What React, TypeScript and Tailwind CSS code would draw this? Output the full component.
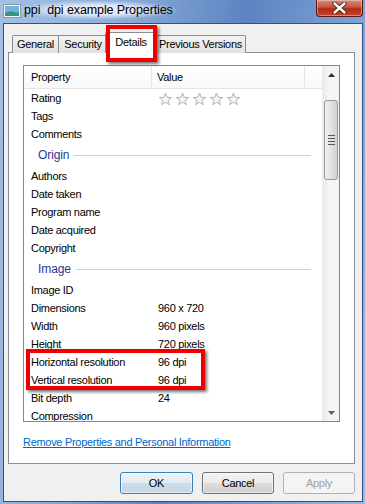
import React from "react";

type Row = { name: string; value?: string; stars?: boolean } | { group: string };

const rows: Row[] = [
  { name: "Rating", stars: true },
  { name: "Tags" },
  { name: "Comments" },
  { group: "Origin" },
  { name: "Authors" },
  { name: "Date taken" },
  { name: "Program name" },
  { name: "Date acquired" },
  { name: "Copyright" },
  { group: "Image" },
  { name: "Image ID" },
  { name: "Dimensions", value: "960 x 720" },
  { name: "Width", value: "960 pixels" },
  { name: "Height", value: "720 pixels" },
  { name: "Horizontal resolution", value: "96 dpi" },
  { name: "Vertical resolution", value: "96 dpi" },
  { name: "Bit depth", value: "24" },
  { name: "Compression" },
];

const Star = () => (
  <svg width="15" height="14" viewBox="0 0 14 14">
    <path
      d="M7 1 L8.59 5.32 L13.18 5.49 L9.57 8.33 L10.82 12.76 L7 10.2 L3.18 12.76 L4.43 8.33 L0.82 5.49 L5.41 5.32 Z"
      fill="#f7f7f7"
      stroke="#b4b4b4"
      strokeWidth="1"
      strokeLinejoin="round"
    />
  </svg>
);

const FileIcon = () => (
  <svg width="18" height="14" viewBox="0 0 18 14">
    <rect x="0.5" y="0.5" width="17" height="13" fill="#f4f6f8" stroke="#8a9aa8" />
    <rect x="2" y="2" width="14" height="10" fill="#6fb7e0" />
    <path d="M2 9 Q7 6 11 8 T16 7 V12 H2 Z" fill="#3f8f7a" />
  </svg>
);

const CloseButton = () => (
  <div className="ml-auto mr-[2px] self-start w-[47px] h-[17px] rounded-b-[4px] border border-t-0 border-[#5a1b13] bg-[linear-gradient(180deg,#d88b7c_0%,#c8533f_45%,#b02a17_55%,#c9452d_100%)] flex items-center justify-center shadow-[inset_0_0_0_1px_rgba(255,255,255,0.35)]">
    <svg width="15" height="12" viewBox="0 0 15 12">
      <path d="M2.5 1.5 L12.5 10.5 M12.5 1.5 L2.5 10.5" stroke="#3b1a14" strokeWidth="4.2" strokeLinecap="round" />
      <path d="M2.5 1.5 L12.5 10.5 M12.5 1.5 L2.5 10.5" stroke="#ffffff" strokeWidth="2.4" strokeLinecap="round" />
    </svg>
  </div>
);

const tabBase =
  "flex items-center justify-center border border-b-0 border-[#898c95] rounded-t-[2px] text-black";

export default function App() {
  return (
    <div
      className="relative w-[365px] h-[504px] overflow-hidden flex flex-col bg-[linear-gradient(100deg,#a3c0e4_0%,#8fb0dc_25%,#5d83c1_55%,#7c9fd2_78%,#9bb8df_100%)] text-[11px] tracking-[-0.3px]"
      style={{ fontFamily: '"Liberation Sans", Arial, sans-serif' }}
    >
      {/* title bar */}
      <div className="h-[23px] flex items-center pl-[3px]">
        <div className="self-start mt-[4px]">
          <FileIcon />
        </div>
        <span className="mt-[-3px] px-[3px] text-[12.5px] tracking-[-0.1px] text-black bg-[radial-gradient(ellipse_at_center,rgba(255,255,255,0.75)_35%,rgba(255,255,255,0)_75%)]">
          ppi&nbsp;&nbsp;dpi example Properties
        </span>
        <CloseButton />
      </div>

      {/* dialog body */}
      <div className="ml-[3px] mr-[2px] mb-[2px] flex-1 flex flex-col border border-[#34527f] bg-[#f0f0f0] pt-[8px] pl-[4px] pr-[7px]">
        {/* tabs */}
        <div className="h-[21px] -mb-px flex items-end pl-[4px] relative z-10">
          <div className={`${tabBase} w-[47px] h-[18px] bg-[linear-gradient(180deg,#f3f3f3,#e2e2e2)]`}>General</div>
          <div className={`${tabBase} -ml-px w-[50px] h-[18px] bg-[linear-gradient(180deg,#f3f3f3,#e2e2e2)]`}>Security</div>
          <div className={`${tabBase} -ml-[3px] w-[52px] h-[21px] bg-white relative z-10 pb-[2px]`}>Details</div>
          <div className={`${tabBase} -ml-[2px] w-[91px] h-[18px] bg-[linear-gradient(180deg,#f3f3f3,#e2e2e2)]`}>Previous Versions</div>
        </div>

        {/* panel */}
        <div className="h-[412px] border border-[#898c95] bg-white pt-[12px] px-[14px] flex flex-col">
          <div className="h-[357px] border border-[#828790] flex overflow-hidden">
            <div className="flex-1 flex flex-col overflow-hidden">
              {/* header */}
              <div className="h-[23px] shrink-0 flex bg-[linear-gradient(180deg,#ffffff,#f7f8f9)] border-b border-[#e5e5e5]">
                <div className="w-[128px] pl-[7px] flex items-center border-r border-[#e3e5e8]">Property</div>
                <div className="w-[153px] pl-[5px] flex items-center border-r border-[#e3e5e8]">Value</div>
              </div>
              {rows.map((r, i) =>
                "group" in r ? (
                  <div key={i} className="h-[24px] shrink-0 flex items-center pl-[14px] pr-[11px] gap-[5px]">
                    <span className="text-[12px] tracking-[-0.1px] text-[#1e3a96]">{r.group}</span>
                    <div className="flex-1 h-px bg-[#c2d0ea]" />
                  </div>
                ) : (
                  <div key={i} className="h-[18px] shrink-0 flex items-center text-black">
                    <div className="w-[128px] pl-[7px]">{r.name}</div>
                    <div className="pl-[6px] flex items-center">
                      {r.stars ? (
                        <div className="flex gap-[2px] mt-[1px]">
                          <Star />
                          <Star />
                          <Star />
                          <Star />
                          <Star />
                        </div>
                      ) : (
                        r.value
                      )}
                    </div>
                  </div>
                )
              )}
            </div>

            {/* scrollbar */}
            <div className="w-[17px] shrink-0 flex flex-col bg-[linear-gradient(90deg,#eaeaea,#f6f6f6_40%,#f2f2f2)] border-l border-[#ececec]">
              <div className="h-[17px] flex items-center justify-center">
                <svg width="7" height="4" viewBox="0 0 7 4">
                  <path d="M0 4 L3.5 0 L7 4 Z" fill="#303030" />
                </svg>
              </div>
              <div className="h-[17px]" />
              <div className="mx-[1px] h-[80px] rounded-[3px] border border-[#979797] bg-[linear-gradient(90deg,#f1f1f1,#e2e2e2_50%,#d2d2d2)] flex flex-col items-center justify-center gap-[2px]">
                <div className="w-[7px] h-px bg-[#5b5b5b]" />
                <div className="w-[7px] h-px bg-[#5b5b5b]" />
                <div className="w-[7px] h-px bg-[#5b5b5b]" />
                <div className="w-[7px] h-px bg-[#5b5b5b]" />
              </div>
              <div className="flex-1" />
              <div className="h-[17px] flex items-center justify-center">
                <svg width="7" height="4" viewBox="0 0 7 4">
                  <path d="M0 0 L3.5 4 L7 0 Z" fill="#606060" />
                </svg>
              </div>
            </div>
          </div>

          <div className="mt-[12px]">
            <span className="text-[#0066cc] underline">Remove Properties and Personal Information</span>
          </div>
        </div>

        {/* buttons */}
        <div className="mt-[8px] h-[22px] flex justify-end gap-[9px]">
          <button className="w-[73px] h-[22px] rounded-[3px] border border-[#3c7fb1] bg-[linear-gradient(180deg,#edf4f9_0%,#e1ebf3_50%,#cfdde9_51%,#c6d6e4_100%)] shadow-[inset_0_0_0_1px_rgba(255,255,255,0.6)] text-black">
            OK
          </button>
          <button className="w-[72px] h-[22px] rounded-[3px] border border-[#707070] bg-[linear-gradient(180deg,#f2f2f2_0%,#ebebeb_50%,#dddddd_51%,#cfcfcf_100%)] shadow-[inset_0_0_0_1px_rgba(255,255,255,0.6)] text-black">
            Cancel
          </button>
          <button className="w-[72px] h-[22px] rounded-[3px] border border-[#adb2b5] bg-[#f4f4f4] text-[#a0a0a0]">
            Apply
          </button>
        </div>
      </div>

      {/* red highlight annotations */}
      <div className="absolute left-[106px] top-[25px] w-[51px] h-[37px] border-[4px] border-[#ee0000] shadow-[2px_2px_3px_rgba(0,0,0,0.55)] z-20" />
      <div className="absolute left-[26px] top-[349px] w-[179px] h-[41px] border-[4px] border-[#ee0000] shadow-[2px_2px_3px_rgba(0,0,0,0.55)] z-20" />
    </div>
  );
}
